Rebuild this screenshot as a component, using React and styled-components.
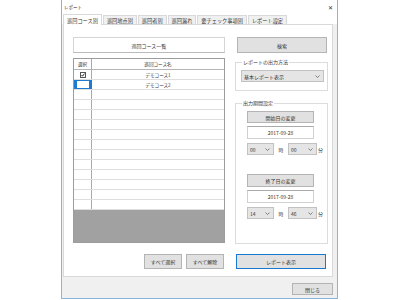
import styled, { createGlobalStyle } from "styled-components";

const GlobalStyle = createGlobalStyle`
  html, body {
    margin: 0;
    padding: 0;
    background: #fff;
  }
  body {
    width: 400px;
    height: 300px;
    overflow: hidden;
    font-family: "Noto Sans CJK JP", "Noto Sans", sans-serif;
    color: #333;
  }
  * { box-sizing: border-box; }
`;

const tabs = ["巡回コース別", "巡回地点別", "巡回者別", "巡回漏れ", "要チェック事項別", "レポート設定"];

const rows = [
  { checked: true, name: "デモコース1" },
  { focused: true, name: "デモコース2" },
  ...Array.from({ length: 12 }, () => ({})),
];

const Chevron = () => (
  <svg width="5" height="3" viewBox="0 0 5 3">
    <polyline points="0.5,0.5 2.5,2.5 4.5,0.5" fill="none" stroke="#555" strokeWidth="0.7" />
  </svg>
);

const CheckMark = () => (
  <svg width="4" height="4" viewBox="0 0 4 4">
    <polyline points="0.5,2 1.5,3.2 3.5,0.6" fill="none" stroke="#111" strokeWidth="0.9" />
  </svg>
);

const Combo = ({ value, width }) => (
  <ComboBox $width={width}>
    <span>{value}</span>
    <Chevron />
  </ComboBox>
);

const TimeRow = ({ hour, minute }) => (
  <TimeLine>
    <Combo value={hour} width={27} />
    <Unit $w={14}>時</Unit>
    <Combo value={minute} width={29} />
    <Unit $w={7}>分</Unit>
  </TimeLine>
);

const App = () => (
  <>
    <GlobalStyle />
    <Window>
      <TitleBar>
        <span>レポート</span>
        <Close>✕</Close>
      </TitleBar>

      <TabStrip>
        {tabs.map((t, i) => (
          <Tab key={t} $active={i === 0}>
            {t}
          </Tab>
        ))}
      </TabStrip>

      <Panel>
        <LeftColumn>
          <ListHeader>巡回コース一覧</ListHeader>
          <Grid>
            <GridRow $head>
              <SelCell>選択</SelCell>
              <NameCell>巡回コース名</NameCell>
            </GridRow>
            {rows.map((r, i) => (
              <GridRow key={i}>
                <SelCell $focused={r.focused}>
                  {r.checked && (
                    <Check>
                      <CheckMark />
                    </Check>
                  )}
                </SelCell>
                <NameCell>{r.name}</NameCell>
              </GridRow>
            ))}
            <GridEmpty />
          </Grid>
          <ButtonRow>
            <Button $w={38}>すべて選択</Button>
            <Button $w={38}>すべて解除</Button>
          </ButtonRow>
        </LeftColumn>

        <RightColumn>
          <Button $w={90} $h={16} $ml={2}>
            検索
          </Button>

          <Group $h={32}>
            <Legend>レポートの出力方法</Legend>
            <Combo value="基本レポート表示" width={83} />
          </Group>

          <Group $h={144} $mt={9}>
            <Legend>出力期間設定</Legend>
            <PeriodBlock>
              <Button $w={67} $h={12}>
                開始日の変更
              </Button>
              <DateBox>2017-09-28</DateBox>
              <TimeRow hour="00" minute="00" />
            </PeriodBlock>
            <PeriodBlock $mt={19}>
              <Button $w={67} $h={13}>
                終了日の変更
              </Button>
              <DateBox>2017-09-28</DateBox>
              <TimeRow hour="14" minute="46" />
            </PeriodBlock>
          </Group>

          <Button $w={90} $h={15} $ml={1} $mt={10} $primary>
            レポート表示
          </Button>
        </RightColumn>
      </Panel>

      <Footer>
        <Button $w={41} $h={12}>
          閉じる
        </Button>
      </Footer>
    </Window>
  </>
);

export default App;

const Window = styled.div`
  margin-left: 61px;
  width: 277px;
  height: 299px;
  border: 1px solid #86b6dd;
  border-top: none;
  background: #f0f0f0;
  display: flex;
  flex-direction: column;
`;

const TitleBar = styled.div`
  height: 14px;
  flex: 0 0 14px;
  background: #fff;
  display: flex;
  align-items: center;
  justify-content: space-between;
  padding: 0 4px 0 2px;
  font-size: 4.5px;
  color: #222;
`;

const Close = styled.span`
  font-family: "DejaVu Sans", sans-serif;
  font-size: 6px;
  color: #333;
`;

const TabStrip = styled.div`
  display: flex;
  align-items: flex-end;
  gap: 1px;
  height: 10px;
  flex: 0 0 10px;
  padding-left: 1px;
  background: #fff;
`;

const Tab = styled.div`
  position: relative;
  height: ${(p) => (p.$active ? 11 : 9)}px;
  margin-bottom: ${(p) => (p.$active ? -1 : 0)}px;
  padding: 0 3px;
  display: flex;
  align-items: center;
  font-size: 5.2px;
  white-space: nowrap;
  background: ${(p) => (p.$active ? "#fff" : "#f0f0f0")};
  border: 1px solid #d9d9d9;
  border-bottom: none;
  z-index: ${(p) => (p.$active ? 1 : 0)};
`;

const Panel = styled.div`
  flex: 0 0 253px;
  margin: 0 4px 0 1px;
  background: #fff;
  border: 1px solid #d9d9d9;
  display: flex;
  gap: 10px;
  padding: 12px 0 0 9px;
`;

const LeftColumn = styled.div`
  width: 152px;
  display: flex;
  flex-direction: column;
`;

const ListHeader = styled.div`
  height: 16px;
  border: 1px solid #d5d5d5;
  border-bottom-color: #bbb;
  display: flex;
  align-items: center;
  justify-content: center;
  font-size: 5px;
`;

const Grid = styled.div`
  margin-top: 5px;
  height: 185px;
  border: 1px solid #9c9c9c;
  display: flex;
  flex-direction: column;
  background: #fff;
`;

const GridRow = styled.div`
  flex: 0 0 ${(p) => (p.$head ? 11 : 10)}px;
  display: flex;
  border-bottom: 1px solid ${(p) => (p.$head ? "#b5b5b5" : "#dedede")};
  font-size: 4.6px;
`;

const SelCell = styled.div`
  width: 18px;
  border-right: 1px solid #a8a8a8;
  display: flex;
  align-items: center;
  justify-content: center;
  ${(p) =>
    p.$focused &&
    `
    border: 1px solid #1e7ad0;
    border-left-width: 3px;
    border-right-width: 3px;
  `}
`;

const NameCell = styled.div`
  flex: 1;
  display: flex;
  align-items: center;
  justify-content: center;
`;

const Check = styled.span`
  width: 6px;
  height: 6px;
  border: 1px solid #555;
  background: #fff;
  display: flex;
  align-items: center;
  justify-content: center;
`;

const GridEmpty = styled.div`
  flex: 1;
  background: #a1a1a1;
`;

const ButtonRow = styled.div`
  display: flex;
  justify-content: flex-end;
  gap: 4px;
  margin-top: 11px;
  padding-right: 1px;
`;

const Button = styled.div`
  width: ${(p) => p.$w}px;
  height: ${(p) => p.$h || 15}px;
  margin-left: ${(p) => p.$ml || 0}px;
  margin-top: ${(p) => p.$mt || 0}px;
  background: #e1e1e1;
  border: ${(p) => (p.$primary ? "1.5px solid #1978cf" : "1px solid #b4b4b4")};
  display: flex;
  align-items: center;
  justify-content: center;
  font-size: 5px;
  white-space: nowrap;
`;

const RightColumn = styled.div`
  width: 93px;
  display: flex;
  flex-direction: column;
`;

const Group = styled.fieldset`
  margin: ${(p) => p.$mt || 6}px 0 0 0;
  height: ${(p) => p.$h}px;
  border: 1px solid #dcdcdc;
  padding: 5px 3px 0 5px;
  min-width: 0;
`;

const Legend = styled.legend`
  font-size: 5px;
  padding: 0 1px;
  margin-left: 1px;
  line-height: 6px;
`;

const ComboBox = styled.div`
  flex: 0 0 auto;
  width: ${(p) => p.$width}px;
  height: 12px;
  background: #e5e5e5;
  border: 1px solid #c2c2c2;
  display: flex;
  align-items: center;
  justify-content: space-between;
  padding: 0 3px 0 2px;
  font-size: 5px;
`;

const PeriodBlock = styled.div`
  display: flex;
  flex-direction: column;
  align-items: flex-start;
  margin-top: ${(p) => p.$mt || 0}px;
  padding-left: 6px;
`;

const DateBox = styled.div`
  margin-top: 3px;
  width: 67px;
  height: 13px;
  border: 1px solid #d0d0d0;
  border-top-color: #aaa;
  background: #fff;
  display: flex;
  align-items: center;
  justify-content: center;
  font-size: 5px;
`;

const TimeLine = styled.div`
  margin-top: 4px;
  display: flex;
  align-items: center;
`;

const Unit = styled.span`
  flex: 0 0 ${(p) => p.$w}px;
  font-size: 5px;
  text-align: center;
`;

const Footer = styled.div`
  flex: 1;
  display: flex;
  justify-content: flex-end;
  align-items: flex-start;
  padding: 6px 4px 0 0;
`;
